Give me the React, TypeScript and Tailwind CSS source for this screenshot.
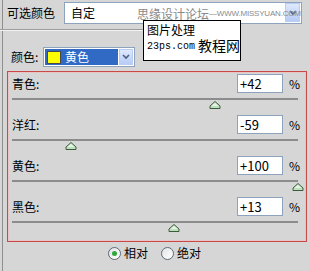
const cjk = '"Noto Sans CJK SC", "Liberation Sans", sans-serif';

const sliders = [
  { label: "青色:", value: 42 },
  { label: "洋红:", value: -59 },
  { label: "黄色:", value: 100 },
  { label: "黑色:", value: 13 },
];

function DropButton({ className }: { className?: string }) {
  return (
    <div
      className={`flex items-center justify-center border border-[#b9cdf3] bg-gradient-to-b from-[#dfe8fd] to-[#b7cbf6] ${className ?? ""}`}
    >
      <svg width="8" height="6" viewBox="0 0 8 6">
        <path d="M1 1 L4 4 L7 1" fill="none" stroke="#4d6185" strokeWidth="1.6" />
      </svg>
    </div>
  );
}

function Thumb({ value }: { value: number }) {
  const left = (286 * (value + 100)) / 200;
  return (
    <svg
      className="absolute top-[3px]"
      style={{ left: left - 6 }}
      width="12"
      height="8"
      viewBox="0 0 12 8"
    >
      <path d="M6 0.5 L11 5 L11 7.5 L1 7.5 L1 5 Z" fill="#bfe0bf" stroke="#3d5a3d" strokeWidth="1" />
      <path d="M6 2 L9.5 5 L2.5 5 Z" fill="#e6f5e6" />
    </svg>
  );
}

function Radio({ checked, label }: { checked?: boolean; label: string }) {
  return (
    <div className="flex items-center">
      <div className="flex h-[13px] w-[13px] items-center justify-center rounded-full border border-[#5a6a7a] bg-gradient-to-br from-[#e4e4e4] to-white">
        {checked ? <div className="h-[5px] w-[5px] rounded-full bg-[#2fa83a]" /> : null}
      </div>
      <span className="ml-[3px] text-[12px] leading-[14px] text-black">{label}</span>
    </div>
  );
}

export default function App() {
  return (
    <div
      className="relative h-[271px] w-[310px] overflow-hidden bg-[#d6d6d6] text-[12px] text-black shadow-[inset_2px_0_0_#d6d6d6,inset_3px_0_0_#8e8e8e]"
      style={{ fontFamily: cjk }}
    >
      <div className="mt-[1px] flex h-[23px] items-center">
        <span className="w-[64px] pl-[7px] leading-[22px]">可选颜色</span>
        <div className="flex h-[22px] w-[238px] items-center border border-[#8da2bd] bg-white pl-[6px]">
          <span className="flex-1">自定</span>
          <DropButton className="mr-px h-[19px] w-[15px]" />
        </div>
      </div>

      <div className="mt-[5px] h-px w-[143px] bg-[#9c9c9c]" />
      <div className="h-px w-[143px] bg-[#f2f2f2]" />

      <div className="mt-[16px] flex h-[20px] items-center">
        <span className="w-[43px] pl-[11px]">颜色:</span>
        <div className="flex h-[20px] w-[92px] items-center border border-[#8da2bd] bg-white p-px">
          <div className="flex h-full w-[73px] items-center bg-[#316ac5] pl-[2px]">
            <div className="h-[13px] w-[14px] border border-[#4a4a4a] bg-[#ffff00]" />
            <span className="ml-[4px] leading-none text-white">黄色</span>
          </div>
          <DropButton className="ml-px h-full flex-1" />
        </div>
      </div>

      <div className="ml-[7px] mt-[4px] h-[171px] w-[300px] border border-[#c94848] pt-[2px] shadow-[inset_0_0_0_1px_#e9c4c4]">
        {sliders.map((s) => (
          <div key={s.label} className="h-[41px]">
            <div className="flex h-[19px] items-center">
              <span className="flex-1 pl-[4px] leading-none">{s.label}</span>
              <div className="flex h-[19px] w-[46px] items-center border border-[#8da2bd] bg-white pl-[2px] text-[13px] leading-none">
                {(s.value > 0 ? "+" : "") + s.value}
              </div>
              <span className="w-[23px] pl-[6px] text-[12px] leading-none">%</span>
            </div>
            <div className="relative ml-[4px] mt-[5px] h-[2px] w-[286px] bg-[#8c8c8c]">
              <Thumb value={s.value} />
            </div>
          </div>
        ))}
      </div>

      <div className="mt-[4px] flex items-center pl-[108px]">
        <Radio checked label="相对" />
        <div className="w-[13px]" />
        <Radio label="绝对" />
      </div>

      {/* watermark laid over the panel */}
      <div className="absolute left-[137px] top-[8px] flex items-center whitespace-nowrap leading-none text-[#8a8a8a]">
        <span className="text-[12px]">思缘设计论坛</span>
        <span className="text-[8px] tracking-[-0.2px]" style={{ fontFamily: '"Liberation Sans", sans-serif' }}>
          —WWW.MISSYUAN.COM
        </span>
      </div>
      <div className="absolute left-[143px] top-[20px] h-[41px] w-[98px] border border-black bg-white">
        <div className="absolute left-[3px] top-[3px] text-[12px] leading-none">图片处理</div>
        <div
          className="absolute left-[3px] top-[21px] text-[10px] leading-none"
          style={{ fontFamily: '"Liberation Mono", monospace' }}
        >
          23ps.com
        </div>
        <div className="absolute left-[54px] top-[17px] text-[14px] leading-none">教程网</div>
      </div>
    </div>
  );
}
